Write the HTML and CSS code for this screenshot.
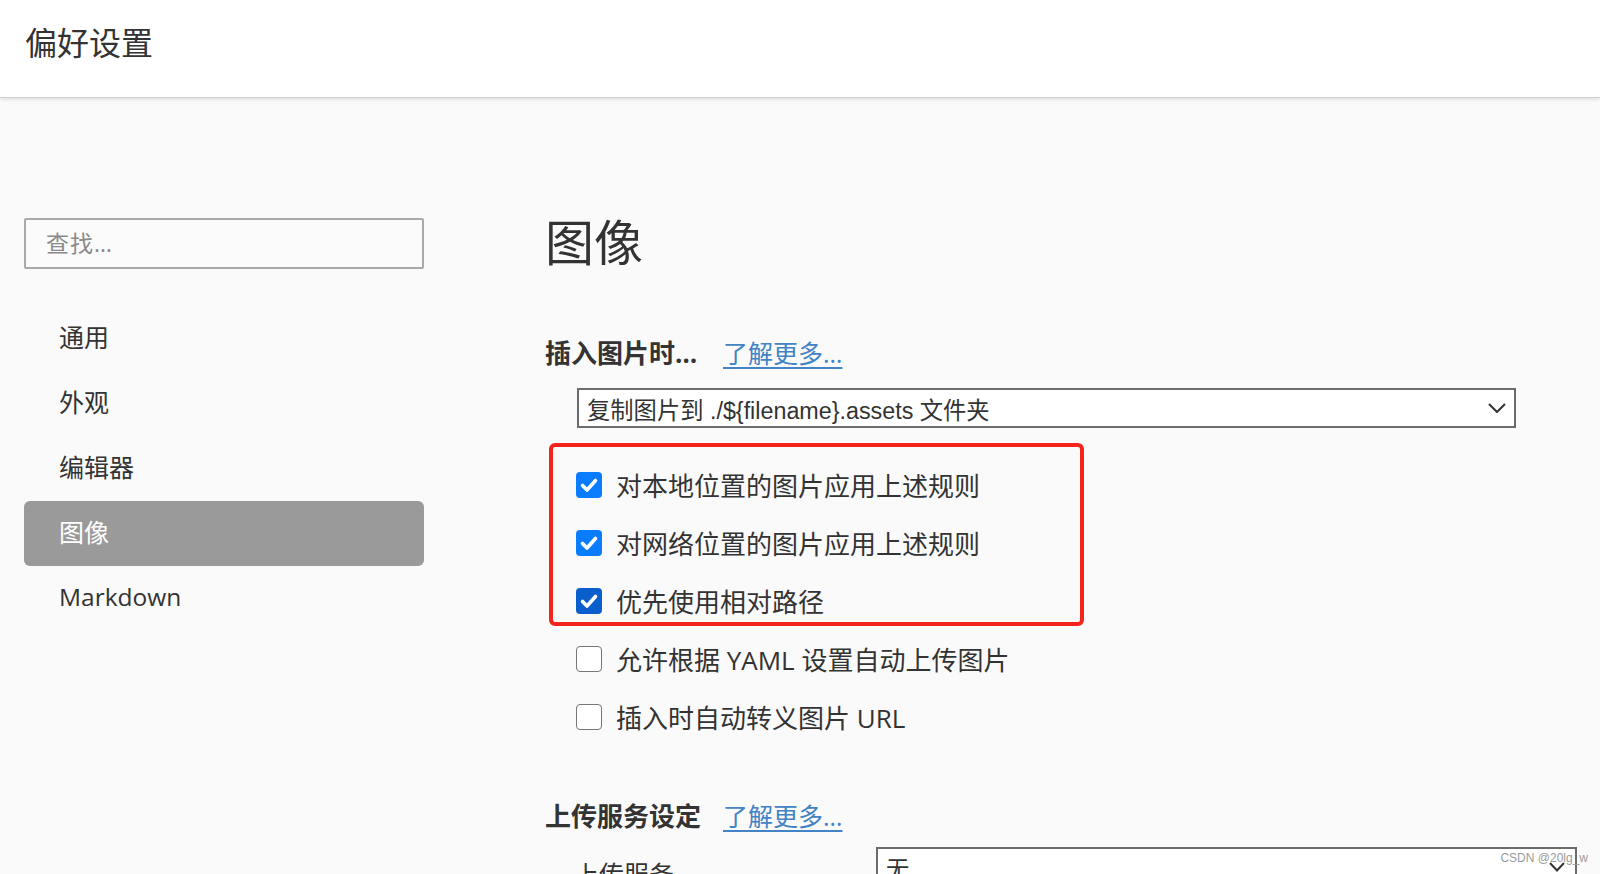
FILE: index.html
```html
<!DOCTYPE html>
<html lang="zh-CN">
<head>
<meta charset="utf-8">
<title>偏好设置</title>
<link rel="stylesheet" href="styles.css">
</head>
<body>
<header class="topbar">
  <h1 class="title">偏好设置</h1>
</header>
<div class="layout">
  <aside class="sidebar">
    <div class="search"><span class="placeholder">查找…</span></div>
    <nav class="nav">
      <div class="nav-item">通用</div>
      <div class="nav-item">外观</div>
      <div class="nav-item">编辑器</div>
      <div class="nav-item active">图像</div>
      <div class="nav-item latin">Markdown</div>
    </nav>
  </aside>
  <main class="main">
    <h2 class="page-title">图像</h2>
    <div class="section-head first">
      <span class="section-title">插入图片时…</span>
      <a class="link" href="#">了解更多…</a>
    </div>
    <div class="select wide">
      <span class="select-text">复制图片到 ./${filename}.assets 文件夹</span>
      <svg class="chevron" width="18" height="10" viewBox="0 0 18 10"><polyline points="1,1 9,9 17,1" fill="none" stroke="#333" stroke-width="2"/></svg>
    </div>
    <div class="checks">
      <div class="highlight"></div>
      <div class="check-row">
        <span class="box on"><svg width="26" height="26" viewBox="0 0 26 26"><polyline points="6.5,13.5 11,18 19.5,8.5" fill="none" stroke="#fff" stroke-width="3.6" stroke-linecap="round" stroke-linejoin="round"/></svg></span>
        <span class="label">对本地位置的图片应用上述规则</span>
      </div>
      <div class="check-row">
        <span class="box on"><svg width="26" height="26" viewBox="0 0 26 26"><polyline points="6.5,13.5 11,18 19.5,8.5" fill="none" stroke="#fff" stroke-width="3.6" stroke-linecap="round" stroke-linejoin="round"/></svg></span>
        <span class="label">对网络位置的图片应用上述规则</span>
      </div>
      <div class="check-row">
        <span class="box on focus"><svg width="26" height="26" viewBox="0 0 26 26"><polyline points="6.5,13.5 11,18 19.5,8.5" fill="none" stroke="#fff" stroke-width="3.6" stroke-linecap="round" stroke-linejoin="round"/></svg></span>
        <span class="label">优先使用相对路径</span>
      </div>
      <div class="check-row">
        <span class="box"></span>
        <span class="label">允许根据 YAML 设置自动上传图片</span>
      </div>
      <div class="check-row">
        <span class="box"></span>
        <span class="label">插入时自动转义图片 URL</span>
      </div>
    </div>
    <div class="section-head second">
      <span class="section-title">上传服务设定</span>
      <a class="link" href="#">了解更多…</a>
    </div>
    <div class="field-row">
      <span class="field-label">上传服务</span>
      <div class="select narrow">
        <span class="select-text">无</span>
        <svg class="chevron" width="16" height="10" viewBox="0 0 16 10"><polyline points="1,1 8,8.5 15,1" fill="none" stroke="#333" stroke-width="2"/></svg>
      </div>
    </div>
  </main>
</div>
<div class="watermark">CSDN @20lg_w</div>
</body>
</html>
```

FILE: styles.css
```css
html, body {
  margin: 0;
  padding: 0;
  height: 100%;
  overflow: hidden;
}
body {
  background: #fafafa;
  color: #333;
  font-family: "Open Sans", "Noto Sans CJK SC", sans-serif;
}
.topbar {
  height: 97px;
  background: #fff;
  border-bottom: 1px solid #d0d0d0;
  box-shadow: 0 1px 4px rgba(0, 0, 0, 0.14);
  box-sizing: content-box;
  padding: 0 25px;
}
.title {
  margin: 0;
  padding-top: 27px;
  font-size: 32px;
  line-height: 32px;
  font-weight: normal;
  color: #333;
}
.layout {
  display: flex;
  gap: 121px;
}
.sidebar {
  margin-left: 24px;
  width: 400px;
  flex: none;
  padding-top: 120px;
}
.search {
  height: 51px;
  box-sizing: border-box;
  border: 2px solid #a9a9a9;
  border-radius: 2px;
  background: #fbfbfb;
  display: flex;
  align-items: center;
  padding-left: 20px;
  padding-bottom: 3px;
}
.placeholder {
  font-size: 23px;
  color: #8a8a8a;
  letter-spacing: 1px;
}
.nav {
  margin-top: 37px;
  display: flex;
  flex-direction: column;
}
.nav-item {
  height: 65px;
  box-sizing: border-box;
  display: flex;
  align-items: center;
  padding-left: 35px;
  padding-bottom: 5px;
  font-size: 25px;
  color: #333;
  border-radius: 6px;
}
.nav-item.latin {
  font-size: 24.5px;
}
.nav-item.active {
  background: #9a9a9a;
  color: #fff;
}
.main {
  flex: 1;
  padding-top: 119px;
}
.page-title {
  margin: 0;
  font-size: 49px;
  line-height: 50px;
  font-weight: normal;
  color: #333;
}
.section-head {
  display: flex;
  align-items: center;
  height: 26px;
}
.section-head.first {
  margin-top: 72px;
}
.section-head.second {
  margin-top: 56px;
}
.section-title {
  width: 178px;
  flex: none;
  font-size: 26px;
  font-weight: bold;
  color: #333;
}
.link {
  font-size: 25px;
  color: #4183c4;
  text-decoration: underline;
  text-underline-offset: 4px;
}
.select {
  box-sizing: border-box;
  height: 40px;
  border: 2px solid #6b6b6b;
  background: #fff;
  display: flex;
  align-items: center;
  justify-content: space-between;
  padding: 2px 8px 0 8px;
}
.select .chevron {
  margin-top: -2px;
}
.select.wide {
  margin-top: 23px;
  margin-left: 32px;
  width: 939px;
}
.select-text {
  font-family: "Liberation Sans", "Noto Sans CJK SC", sans-serif;
  font-size: 23.3px;
  color: #333;
}
.checks {
  position: relative;
  margin-top: 28px;
}
.highlight {
  position: absolute;
  left: 4px;
  top: -13px;
  width: 535px;
  height: 183px;
  box-sizing: border-box;
  border: 4px solid #f4231c;
  border-radius: 6px;
  pointer-events: none;
}
.check-row {
  height: 58px;
  display: flex;
  align-items: center;
  padding-left: 31px;
  box-sizing: border-box;
}
.box {
  width: 26px;
  height: 26px;
  box-sizing: border-box;
  border: 1.5px solid #767676;
  border-radius: 4px;
  background: #fff;
  flex: none;
  display: flex;
}
.box.on {
  border: none;
  background: #0a7cff;
}
.box.on.focus {
  background: #0b5fcc;
}
.label {
  margin-left: 14px;
  font-size: 26px;
  color: #333;
}
.field-row {
  margin-top: 19px;
  display: flex;
  align-items: flex-start;
}
.field-label {
  width: 302px;
  padding-left: 29px;
  padding-top: 8px;
  font-size: 25px;
  color: #333;
  flex: none;
}
.select.narrow {
  width: 701px;
  height: 40px;
  padding-right: 10px;
}
.watermark {
  position: absolute;
  right: 12px;
  bottom: 9px;
  font-family: "Liberation Sans", sans-serif;
  font-size: 12px;
  color: #9a9a9a;
}
```
